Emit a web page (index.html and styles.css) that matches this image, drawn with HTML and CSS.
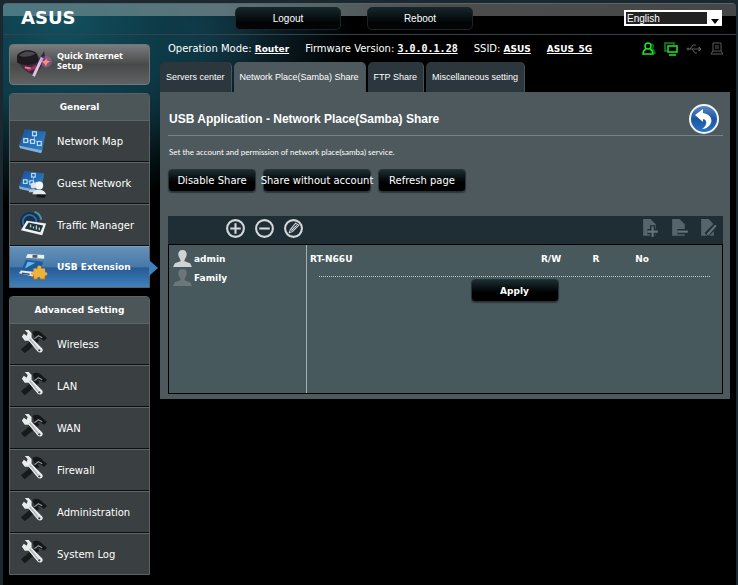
FILE: index.html
```
<!DOCTYPE html>
<html lang="en">
<head>
  <meta charset="UTF-8">
  <meta name="viewport" content="width=device-width, initial-scale=1.0">
  <title>ASUS Wireless Router - Network Place (Samba) Share</title>
  <link rel="stylesheet" href="styles.css">
</head>
<body>
  <!-- shared icons -->
  <svg class="defs" width="0" height="0" aria-hidden="true">
    <defs>
      <linearGradient id="blueMap" x1="0" y1="0" x2="1" y2="1">
        <stop offset="0" stop-color="#1b4f92"/>
        <stop offset="1" stop-color="#2f86cf"/>
      </linearGradient>
      <linearGradient id="backBlue" x1="0" y1="0" x2="0" y2="1">
        <stop offset="0" stop-color="#5d8cc4"/>
        <stop offset="0.5" stop-color="#1b55a3"/>
        <stop offset="1" stop-color="#2b78c9"/>
      </linearGradient>
    </defs>
    <symbol id="map" viewBox="0 0 32 32">
      <path d="M7 3 L29 6 L25 25 L1 20 Z" fill="url(#blueMap)"/>
      <path d="M1 20 L25 25 L24 28 L2 23 Z" fill="#7fb0dc"/>
      <path d="M17 9 v5 M9 16 l7 -2 l6 4" stroke="#7eb7ea" fill="none"/>
      <g fill="#2467ac" stroke="#b7dcfa" stroke-width="1.3">
        <rect x="15" y="6" width="4" height="4"/>
        <rect x="6" y="13" width="4" height="4"/>
        <rect x="13" y="14" width="4" height="4"/>
        <rect x="20" y="16" width="4" height="4"/>
      </g>
    </symbol>
    <symbol id="tools" viewBox="0 3 32 32">
      <path d="M3 24 L19 11 L22 15 L7 28 Z" fill="#17191a"/>
      <path d="M15 6 C19 3 24 6 26 9 L30 12 L27 15 L22 12 L18 14 Z" fill="#141617"/>
      <path d="M17 13 l4 -3 l4 2" stroke="#8d9294" stroke-width="1.3" fill="none"/>
      <path d="M7 4 L10 7 L9 10 L6 8 L4 11 L7 15 L11 15 L20 26 C23 29 27 26 25 23 L14 12 L14 7 L11 4 Z" fill="#e9ebec"/>
      <path d="M12 13 L21 24" stroke="#aeb3b6" stroke-width="1.5"/>
      <circle cx="22" cy="25" r="1.2" fill="#3b4042"/>
    </symbol>
    <symbol id="person" viewBox="0 0 20 20">
      <path d="M10 1 C14 1 15 4 14 8 C13 10 12 11 12 13 L18 15 L20 19 H0 L2 15 L8 13 C8 11 7 10 6 8 C5 4 6 1 10 1 Z" fill="currentColor"/>
    </symbol>
  </svg>

  <div class="shell">
    <header class="topbar">
      <a class="logo" href="#">ASUS</a>
      <div class="top-actions">
        <button class="top-button">Logout</button>
        <button class="top-button">Reboot</button>
      </div>
      <div class="language">
        <select class="language-select" aria-label="Language">
          <option>English</option>
        </select>
        <svg class="language-arrow" viewBox="0 0 8 5" aria-hidden="true"><path d="M0 0 H8 L4 5 Z"/></svg>
      </div>
    </header>

    <div class="columns">
      <nav class="sidebar">
        <a class="quick-setup" href="#">
          <svg class="quick-icon" viewBox="0 0 38 34" aria-hidden="true">
            <path d="M3 15 C6 22 14 27 20 28 L28 14 L20 6 Z" fill="#3b2c42"/>
            <path d="M6 18 C11 22 16 21 20 17 L21 21 L13 24 Z" fill="#a72b58"/>
            <path d="M9 20 l6 1" stroke="#ff7892" stroke-width="2"/>
            <path d="M1 8 C4 1 19 0 22 7 L23 14 C17 19 6 18 1 15 Z" fill="#1d1b20"/>
            <path d="M3 8 C7 3 15 2 20 6 C15 9 8 10 3 8 Z" fill="#4a474f"/>
            <path d="M26 8 L29 3 L30 11 L23 24 Z" fill="#2c2631"/>
            <path d="M27 10 L18 29" stroke="#d9c5e6" stroke-width="3"/>
            <circle cx="31" cy="14" r="6" fill="#b96ac7" opacity="0.4"/>
            <path d="M31 10 L32 13 L35 14 L32 16 L31 19 L29 16 L26 14 L30 13 Z" fill="#ff8a78"/>
          </svg>
          <span>Quick Internet Setup</span>
        </a>

        <section class="menu">
          <h2 class="menu-title">General</h2>
          <a class="menu-item" href="#">
            <svg class="menu-icon" aria-hidden="true"><use href="#map"/></svg>Network Map
          </a>
          <a class="menu-item" href="#">
            <svg class="menu-icon" viewBox="0 0 32 32" aria-hidden="true">
              <use href="#map" width="30" height="30"/>
              <path d="M20 26 l9 2 l-2 3 l-8 -1 Z" fill="#151718"/>
              <circle cx="16" cy="18" r="3" fill="#dfe3e6"/>
              <circle cx="22" cy="18" r="4" fill="#f3f5f6"/>
              <path d="M11 25 C12 21 19 21 21 25 Z" fill="#c5cbd0"/>
              <path d="M15 27 C16 21 27 21 29 27 Z" fill="#e6eaed"/>
            </svg>Guest Network
          </a>
          <a class="menu-item" href="#">
            <svg class="menu-icon" viewBox="0 0 32 32" aria-hidden="true">
              <circle cx="12" cy="12" r="10" fill="#16304c"/>
              <circle cx="12" cy="12" r="7" fill="none" stroke="#2f6c9d" stroke-width="2"/>
              <path d="M17 2 a10 10 0 0 1 7 8" stroke="#4694b4" stroke-width="2" fill="none"/>
              <path d="M9 11 L29 14 L25 26 L3 21 Z" fill="#f0f1f1"/>
              <path d="M11 13 L26 16 L23 23 L7 19 Z" fill="#25333b"/>
              <path d="M13 18 v-3 M16 19 v-2 M19 20 v-4 M22 21 v-3" stroke="#a9d0c0" stroke-width="1.4"/>
            </svg>Traffic Manager
          </a>
          <a class="menu-item active" href="#">
            <svg class="menu-icon" viewBox="0 0 32 32" aria-hidden="true">
              <path d="M10 2 L27 3 L27 7 L8 6 Z" fill="#eceee9"/>
              <path d="M15 3 h5 v3 h-5 Z" fill="#4d6069"/>
              <path d="M8 8 L26 10 L22 21 L4 18 Z" fill="#1d5c9b"/>
              <path d="M10 10 L18 11 L7 17 Z" fill="#6ab5e4"/>
              <path d="M3 19 L21 21 L19 26 L1 22 Z" fill="#e8ecee"/>
              <path d="M4 22 l8 1" stroke="#35566b" stroke-width="1.5"/>
              <path d="M16 17 h4 c-1 -4 5 -4 4 0 h4 v4 c3 -1 3 4 0 3 v4 h-5 c1 -3 -4 -3 -3 0 h-4 v-4 c-4 0 -4 -4 0 -3 Z" fill="#f1b137"/>
              <path d="M16 24 v4 h4 M23 28 h5 v-3" stroke="#a9640e" fill="none"/>
            </svg>USB Extension
          </a>
        </section>

        <section class="menu">
          <h2 class="menu-title">Advanced Setting</h2>
          <a class="menu-item" href="#"><svg class="menu-icon" aria-hidden="true"><use href="#tools"/></svg>Wireless</a>
          <a class="menu-item" href="#"><svg class="menu-icon" aria-hidden="true"><use href="#tools"/></svg>LAN</a>
          <a class="menu-item" href="#"><svg class="menu-icon" aria-hidden="true"><use href="#tools"/></svg>WAN</a>
          <a class="menu-item" href="#"><svg class="menu-icon" aria-hidden="true"><use href="#tools"/></svg>Firewall</a>
          <a class="menu-item" href="#"><svg class="menu-icon" aria-hidden="true"><use href="#tools"/></svg>Administration</a>
          <a class="menu-item" href="#"><svg class="menu-icon" aria-hidden="true"><use href="#tools"/></svg>System Log</a>
        </section>
      </nav>

      <main class="main">
        <div class="info">
          <span>Operation Mode: <a href="#">Router</a></span>
          <span>Firmware Version: <a class="version" href="#">3.0.0.1.28</a></span>
          <span>SSID: <a href="#">ASUS</a></span>
          <a href="#">ASUS_5G</a>
          <div class="status">
            <svg class="status-icon on" viewBox="0 0 14 14" aria-label="Guest network">
              <path d="M9 2 c3 0 3 3 1 5 c2 1 3 2 3 5" opacity="0.5"/>
              <circle cx="6" cy="4" r="3"/>
              <path d="M4 7 C2 8 1 10 1 12 H11 C11 10 10 8 8 7"/>
            </svg>
            <svg class="status-icon on" viewBox="0 0 14 14" aria-label="Clients">
              <path d="M3 9 H1 V1 H10 V3" opacity="0.6"/>
              <rect x="4" y="4" width="9" height="6"/>
              <path d="M5 13 H12"/>
            </svg>
            <svg class="status-icon usb" viewBox="0 0 16 14" aria-label="USB">
              <path d="M1 7 H14 M4 7 L7 3 H10 M6 7 L9 11 H11"/>
              <circle cx="2" cy="7" r="1"/>
              <path d="M13 5 L15 7 L13 9 Z"/>
            </svg>
            <svg class="status-icon" viewBox="0 0 14 14" aria-label="Printer">
              <path d="M3 9 V1 H11 V9 M1 12 L3 9 H11 L13 12 Z M5 4 H9 M5 6 H9"/>
            </svg>
          </div>
        </div>

        <div class="tabs">
          <a class="tab" href="#">Servers center</a>
          <a class="tab current" href="#">Network Place(Samba) Share</a>
          <a class="tab" href="#">FTP Share</a>
          <a class="tab" href="#">Miscellaneous setting</a>
        </div>

        <div class="panel">
          <div class="panel-head">
            <h1 class="panel-title">USB Application - Network Place(Samba) Share</h1>
            <a class="back" href="#" aria-label="Back">
              <svg viewBox="0 0 30 30" aria-hidden="true">
                <circle cx="15" cy="15" r="14" fill="url(#backBlue)" stroke="#f2f5f7" stroke-width="2"/>
                <path d="M6 11 L14 5 V9 C22 10 25 17 20 22 C18 24 16 25 13 25 C18 22 19 16 14 15 V18 Z" fill="#fff"/>
              </svg>
            </a>
          </div>
          <p class="description">Set the account and permission of network place(samba) service.</p>
          <div class="actions">
            <button class="button">Disable Share</button>
            <button class="button wide">Share without account</button>
            <button class="button">Refresh page</button>
          </div>

          <div class="toolbar">
            <div class="account-tools">
              <button class="tool" aria-label="Add account">
                <svg viewBox="0 0 20 20"><circle cx="10" cy="10" r="8"/><path d="M10 5 V15 M5 10 H15"/></svg>
              </button>
              <button class="tool" aria-label="Delete account">
                <svg viewBox="0 0 20 20"><circle cx="10" cy="10" r="8"/><path d="M5 10 H15"/></svg>
              </button>
              <button class="tool" aria-label="Edit account">
                <svg viewBox="0 0 20 20"><circle cx="10" cy="10" r="8"/><path class="thin" d="M6 14 L7 11 L12 5 L15 7 L9 13 Z M8 12 L13 7"/></svg>
              </button>
            </div>
            <div class="folder-tools">
              <button class="tool folder" aria-label="Add folder" disabled>
                <svg viewBox="0 0 20 20"><path class="page" d="M3 1 H10 L15 6 V17 H3 Z"/><path class="outline" d="M12 7 V18 M7 13 H18"/><path d="M12 8 V18 M7 13 H17"/></svg>
              </button>
              <button class="tool folder" aria-label="Delete folder" disabled>
                <svg viewBox="0 0 20 20"><path class="page" d="M3 1 H10 L15 6 V17 H3 Z"/><path class="outline" d="M8 13 H18"/><path d="M8 13 H18"/></svg>
              </button>
              <button class="tool folder" aria-label="Edit folder" disabled>
                <svg viewBox="0 0 20 20"><path class="page" d="M3 1 H10 L15 6 V17 H3 Z"/><path class="outline" d="M8 16 L17 7"/><path d="M9 16 L17 7"/></svg>
              </button>
            </div>
          </div>

          <div class="share">
            <ul class="accounts">
              <li class="account"><svg class="account-icon" aria-hidden="true"><use href="#person"/></svg>admin</li>
              <li class="account inactive"><svg class="account-icon" aria-hidden="true"><use href="#person"/></svg>Family</li>
            </ul>
            <div class="permissions">
              <table class="permission-table">
                <tr>
                  <th class="device">RT-N66U</th>
                  <th class="write">R/W</th>
                  <th class="read">R</th>
                  <th class="none">No</th>
                </tr>
              </table>
              <div class="dots"></div>
              <button class="button apply">Apply</button>
            </div>
          </div>
        </div>
      </main>
    </div>
  </div>
</body>
</html>
```
FILE: styles.css
```
* {
  box-sizing: border-box;
}
body {
  margin: 0;
  padding: 3px 2px 0 3px;
  background: #1b282f;
  color: #fff;
  font-family: "DejaVu Sans", Verdana, sans-serif;
  font-size: 10px;
}
a {
  color: inherit;
}
button {
  color: #fff;
  font-family: inherit;
  cursor: pointer;
}
.defs {
  position: absolute;
}
.shell {
  min-height: calc(100vh - 3px);
  border-radius: 4px 4px 0 0;
  background:
    radial-gradient(ellipse 200px 200px at 60px 10px, #12505f 0%, #0d3a47 50%, transparent 100%),
    radial-gradient(ellipse 170px 120px at 180px 30px, #153d4d 0%, transparent 100%),
    #000;
}

/* Top bar */
.topbar {
  display: flex;
  align-items: center;
  height: 32px;
  padding: 0 14px 2px 18px;
  border-top: 1px solid #56666c;
  border-bottom: 1px solid #33434a;
  border-radius: 4px 4px 0 0;
  background: linear-gradient(90deg, #4b7881, #5c7379 30%, #4d4d4e 60%, #454647) no-repeat 0 0 / 100% 12px;
}
.logo {
  width: 214px;
  font-size: 18px;
  font-weight: bold;
  line-height: 20px;
  text-decoration: none;
}
.top-actions {
  display: flex;
  flex: 1;
  gap: 26px;
}
.top-button {
  width: 106px;
  height: 23px;
  padding: 0;
  border: 1px solid #1b2529;
  border-radius: 5px;
  background: linear-gradient(#14262b, #020405 70%);
  font-family: "Liberation Sans", Arial, sans-serif;
  font-size: 10px;
}
.language {
  position: relative;
  display: flex;
}
.language-select {
  width: 98px;
  height: 16px;
  padding: 0 1px;
  border: 2px solid #fff;
  border-right-width: 15px;
  border-radius: 0;
  appearance: none;
  background: #222;
  color: #fff;
  font-family: "Liberation Sans", Arial, sans-serif;
  font-size: 10px;
}
.language-arrow {
  position: absolute;
  right: 3px;
  bottom: 2px;
  width: 8px;
  height: 5px;
  pointer-events: none;
}

/* Side menu */
.columns {
  display: flex;
  gap: 10px;
  padding: 0 6px 9px;
}
.sidebar {
  display: flex;
  flex-direction: column;
  gap: 8px;
  width: 141px;
  padding-top: 9px;
}
.quick-setup {
  display: flex;
  gap: 4px;
  height: 41px;
  padding: 3px 6px;
  border: 1px solid #70777a;
  border-radius: 4px;
  background: linear-gradient(#7b7c7d, #484949 50%, #606162);
  font-family: "Noto Sans", Verdana, sans-serif;
  font-size: 9px;
  font-weight: bold;
  line-height: 10px;
  text-decoration: none;
}
.quick-setup span {
  padding-top: 3px;
}
.quick-icon {
  flex: none;
  width: 37px;
  height: 33px;
}
.menu {
  border: 1px solid #5b6265;
  border-radius: 4px 4px 0 0;
  background: #3a3f41;
}
.menu-title {
  height: 26px;
  margin: 0;
  border-radius: 3px 3px 0 0;
  background: #4c5558;
  font-size: 9px;
  line-height: 26px;
  text-align: center;
}
.menu-item {
  position: relative;
  display: flex;
  align-items: center;
  gap: 8px;
  height: 42px;
  padding-left: 8px;
  border-top: 1px solid #5d6568;
  border-bottom: 1px solid #0c0e0f;
  text-decoration: none;
}
.menu-item:last-child {
  height: 41px;
  border-bottom: 0;
}
.menu-icon {
  width: 31px;
  height: 31px;
}
.menu-item.active {
  border-top-color: #7ba3c8;
  background: linear-gradient(#6590b8, #4679aa 50%, #275a94 52%, #3e80bd);
  font-size: 9px;
  font-weight: bold;
}
/* Pointer beside the selected entry */
.menu-item.active::after {
  content: "";
  position: absolute;
  top: 13px;
  left: 100%;
  border: 8px solid transparent;
  border-left: 9px solid #4080bd;
  border-right: 0;
}

/* Router information */
.main {
  flex: 1;
  min-width: 0;
}
.info {
  display: flex;
  align-items: center;
  gap: 16px;
  height: 27px;
  padding: 0 6px 0 8px;
  white-space: nowrap;
}
.info a {
  font-size: 9px;
  font-weight: bold;
}
.info .version {
  font-family: "DejaVu Sans Mono", monospace;
  font-size: 10px;
}
.status {
  display: flex;
  gap: 8px;
  margin-left: auto;
}
.status-icon {
  width: 14px;
  height: 14px;
  fill: none;
  stroke: #5b5b5b;
}
.status-icon.on {
  stroke: #1be829;
  stroke-width: 1.5;
}
.status-icon.usb {
  width: 16px;
}

/* Tabs */
.tabs {
  display: flex;
  gap: 2px;
}
.tab {
  height: 30px;
  padding: 0 6px;
  border-right: 1px solid #46545a;
  border-radius: 5px 5px 0 0;
  background: #2b373c;
  font-family: "Liberation Sans", Arial, sans-serif;
  font-size: 9px;
  line-height: 30px;
  text-decoration: none;
  white-space: nowrap;
}
.tab.current {
  background: #4d595d;
}

/* Content */
.panel {
  padding: 10px 7px 5px 8px;
  background: #4d595d;
}
.panel-head {
  display: flex;
  align-items: center;
  justify-content: space-between;
  height: 34px;
  padding: 0 4px 0 1px;
  border-bottom: 1px solid #73848b;
}
.panel-title {
  margin: 0;
  font-family: "Liberation Sans", Arial, sans-serif;
  font-size: 12px;
}
.back,
.back svg {
  display: block;
  width: 30px;
  height: 30px;
}
.description {
  margin: 11px 1px 12px;
  font-family: Lato, Arial, sans-serif;
  font-size: 8px;
  line-height: 10px;
}
.actions {
  display: flex;
  gap: 7px;
}
.button {
  display: flex;
  align-items: center;
  justify-content: center;
  width: 88px;
  height: 23px;
  padding: 0;
  border: 1px solid #263236;
  border-radius: 4px;
  background: linear-gradient(#1b2d33, #000 60%);
  box-shadow: 0 1px 1px #2f383b;
  font-size: 10px;
  white-space: nowrap;
}
.button.wide {
  width: 108px;
}
.toolbar {
  display: flex;
  justify-content: space-between;
  height: 28px;
  margin-top: 24px;
  padding: 2px 4px 0 57px;
  background: #1f2d35;
}
.account-tools,
.folder-tools {
  display: flex;
  gap: 8px;
}
.tool {
  display: block;
  width: 21px;
  height: 21px;
  padding: 0;
  border: 0;
  background: none;
}
.tool svg {
  display: block;
  fill: none;
  stroke: #d3d7d9;
  stroke-width: 2;
}
.tool .thin {
  stroke-width: 1;
}
.tool.folder svg {
  stroke: #65737a;
}
.tool .page {
  fill: #56646b;
  stroke: none;
}
.tool .outline {
  stroke: #1f2d35;
  stroke-width: 5;
}
.share {
  display: flex;
  min-height: 150px;
  border: 1px solid #000;
  background: #48595e;
}
.accounts {
  width: 138px;
  margin: 0;
  padding: 4px;
  border-right: 1px solid #a4b0b4;
  list-style: none;
}
.account {
  display: flex;
  align-items: center;
  gap: 2px;
  height: 19px;
  font-size: 9px;
  font-weight: bold;
}
.account-icon {
  width: 19px;
  height: 19px;
  color: #d0d3d4;
}
.account.inactive .account-icon {
  color: #6d777b;
}
.permissions {
  flex: 1;
}
.permission-table {
  width: 100%;
  border-collapse: collapse;
  table-layout: fixed;
  font-size: 9px;
}
.permission-table th {
  height: 31px;
  padding: 0 0 3px;
}
.permission-table .device {
  padding-left: 3px;
  text-align: left;
}
.permission-table .write {
  width: 50px;
}
.permission-table .read {
  width: 40px;
}
.permission-table .none {
  width: 106px;
  padding-right: 54px;
}
.dots {
  margin: 0 12px 2px;
  border-top: 1px dotted #c5cdd0;
}
.apply {
  margin: 0 auto;
  font-size: 9px;
  font-weight: bold;
}
```
